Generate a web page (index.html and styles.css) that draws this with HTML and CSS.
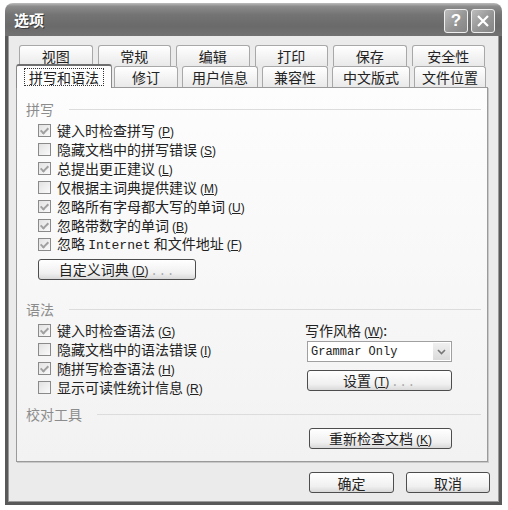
FILE: index.html
```html
<!DOCTYPE html>
<html lang="zh-CN">
<head>
    <meta charset="UTF-8">
    <title>选项</title>
    <link rel="stylesheet" href="styles.css">
</head>
<body>
    <div class="window">
        <div class="titlebar">
            <div class="title">选项</div>
            <div class="title-buttons">
                <div class="tbtn">?</div>
                <div class="tbtn">
                    <svg width="14" height="14" viewBox="0 0 14 14"><path d="M2 2 L12 12 M12 2 L2 12" stroke="#fff" stroke-width="2.2" fill="none"/></svg>
                </div>
            </div>
        </div>

        <div class="frame">
            <div class="tab-row back">
                <div class="tab">视图</div>
                <div class="tab">常规</div>
                <div class="tab">编辑</div>
                <div class="tab">打印</div>
                <div class="tab">保存</div>
                <div class="tab">安全性</div>
            </div>
            <div class="tab-row front">
                <div class="tab selected"><span class="focus">拼写和语法</span></div>
                <div class="tab t-revise">修订</div>
                <div class="tab t-user">用户信息</div>
                <div class="tab t-compat">兼容性</div>
                <div class="tab t-asian">中文版式</div>
                <div class="tab t-files">文件位置</div>
            </div>

            <div class="panel">
                <div class="group-head"><span>拼写</span></div>
                <div class="checks">
                    <div class="check on"><span class="box"></span><span>键入时检查拼写<span class="key">(<u>P</u>)</span></span></div>
                    <div class="check"><span class="box"></span><span>隐藏文档中的拼写错误<span class="key">(<u>S</u>)</span></span></div>
                    <div class="check on"><span class="box"></span><span>总提出更正建议<span class="key">(<u>L</u>)</span></span></div>
                    <div class="check"><span class="box"></span><span>仅根据主词典提供建议<span class="key">(<u>M</u>)</span></span></div>
                    <div class="check on"><span class="box"></span><span>忽略所有字母都大写的单词<span class="key">(<u>U</u>)</span></span></div>
                    <div class="check on"><span class="box"></span><span>忽略带数字的单词<span class="key">(<u>B</u>)</span></span></div>
                    <div class="check on"><span class="box"></span><span>忽略 <span class="latin">Internet</span> 和文件地址<span class="key">(<u>F</u>)</span></span></div>
                </div>
                <div class="btn dict"><span>自定义词典<span class="key">(<u>D</u>)</span><span class="dots">...</span></span></div>

                <div class="group-head grammar-head"><span>语法</span></div>
                <div class="grammar">
                    <div class="checks">
                        <div class="check on"><span class="box"></span><span>键入时检查语法<span class="key">(<u>G</u>)</span></span></div>
                        <div class="check"><span class="box"></span><span>隐藏文档中的语法错误<span class="key">(<u>I</u>)</span></span></div>
                        <div class="check on"><span class="box"></span><span>随拼写检查语法<span class="key">(<u>H</u>)</span></span></div>
                        <div class="check"><span class="box"></span><span>显示可读性统计信息<span class="key">(<u>R</u>)</span></span></div>
                    </div>
                    <div class="style-col">
                        <div class="field-label"><span>写作风格<span class="key">(<u>W</u>)</span>:</span></div>
                        <div class="select">
                            <span class="latin small">Grammar Only</span>
                            <span class="arrow">
                                <svg width="9" height="6" viewBox="0 0 9 6"><path d="M1 1 L4.5 4.5 L8 1" stroke="#777" stroke-width="1.6" fill="none"/></svg>
                            </span>
                        </div>
                        <div class="btn settings"><span>设置<span class="key">(<u>T</u>)</span><span class="dots">...</span></span></div>
                    </div>
                </div>

                <div class="group-head tools-head"><span>校对工具</span></div>
                <div class="btn recheck"><span>重新检查文档<span class="key">(<u>K</u>)</span></span></div>
            </div>

            <div class="footer">
                <div class="btn ok">确定</div>
                <div class="btn cancel">取消</div>
            </div>
        </div>
    </div>
</body>
</html>
```

FILE: styles.css
```css
body {
    margin: 0;
    background: #fff;
    font-family: "Noto Sans CJK SC", sans-serif;
    font-size: 14px;
    line-height: 18px;
    color: #222;
}
.window {
    width: 497px;
    height: 502px;
    margin: 3px 0 0 5px;
    display: flex;
    flex-direction: column;
}
.titlebar {
    height: 33px;
    flex-shrink: 0;
    box-sizing: border-box;
    border-radius: 8px 8px 0 0;
    background: linear-gradient(#bdbdbd 0%, #8c8c8c 10%, #747474 35%, #6a6a6a 70%, #727272 100%);
    display: flex;
    align-items: center;
    justify-content: space-between;
    padding: 0 7px 0 9px;
}
.title {
    color: #fff;
    font-weight: bold;
    font-size: 15px;
    text-shadow: 1px 1px 0 #3a3a3a;
}
.title-buttons {
    display: flex;
    gap: 3px;
    margin-top: 2px;
}
.tbtn {
    width: 22px;
    height: 22px;
    border: 1px solid #eee;
    border-radius: 3px;
    background: linear-gradient(135deg, #bcbcbc 0%, #959595 55%, #858585 100%);
    color: #fff;
    display: flex;
    align-items: center;
    justify-content: center;
    font: bold 17px "Liberation Sans", sans-serif;
}

.frame {
    flex: 1;
    background: #ebebeb;
    border: 3px solid #595959;
    border-top: 0;
    box-shadow: inset 1px 0 0 #9a9a9a, inset -1px 0 0 #9a9a9a, inset 0 -1px 0 #9a9a9a;
    padding: 9px 11px 9px 8px;
    display: flex;
    flex-direction: column;
}

/* tabs */
.tab-row {
    display: flex;
    height: 21px;
    flex-shrink: 0;
}
.tab-row.back {
    padding: 0 3px;
    gap: 5px;
}
.tab-row.back .tab {
    flex: 1;
}
.tab-row.front {
    padding: 0 2px;
    gap: 4px;
}
.tab {
    box-sizing: border-box;
    border: 1px solid #a8a8a8;
    border-bottom: 0;
    border-radius: 3px 3px 0 0;
    background: linear-gradient(#ffffff, #e9e9e9);
    display: flex;
    align-items: center;
    justify-content: center;
    line-height: 1;
}
.tab.selected {
    width: 96px;
    height: 24px;
    margin: -2px -2px -1px;
    position: relative;
    z-index: 1;
    background: #fdfdfd;
    border-color: #8a8a8a;
    border-top: 2px solid #6e6e6e;
}
.focus {
    border: 1px dotted #333;
    padding: 1px 4px;
}
.t-revise { width: 64px; }
.t-user { width: 76px; }
.t-compat { width: 66px; }
.t-asian { width: 78px; }
.t-files { flex: 1; }

/* panel */
.panel {
    height: 375px;
    flex-shrink: 0;
    box-sizing: border-box;
    border: 1px solid #9a9a9a;
    box-shadow: 1px 1px 0 #c9c9c9;
    background: linear-gradient(#fdfdfd, #f2f2f2);
    padding: 12px 6px 0 9px;
    display: flex;
    flex-direction: column;
}
.group-head {
    display: flex;
    align-items: center;
    height: 18px;
    color: #8c8c8c;
}
.group-head::after {
    content: "";
    flex: 1;
    border-top: 1px solid #dcdcdc;
    margin-left: 15px;
}
.grammar-head {
    margin-top: 20px;
}
.tools-head {
    margin-top: 8px;
}
.checks {
    margin-top: 3px;
    padding-left: 12px;
}
.check {
    display: flex;
    align-items: center;
    height: 19px;
    white-space: nowrap;
}
.box {
    width: 13px;
    height: 13px;
    box-sizing: border-box;
    border: 1px solid #8a8a8a;
    background: linear-gradient(135deg, #e2e2e2, #fafafa);
    margin-right: 6px;
    flex-shrink: 0;
    display: flex;
    align-items: center;
    justify-content: center;
}
.check.on .box::after {
    content: "";
    width: 3px;
    height: 6px;
    border: solid #a0a0a0;
    border-width: 0 2px 2px 0;
    transform: rotate(45deg);
    margin-top: -2px;
}
.key {
    font-family: "Liberation Sans", sans-serif;
    font-size: 12px;
    margin-left: 3px;
}
.latin {
    font-family: "Liberation Mono", monospace;
    font-size: 13px;
}
.latin.small {
    font-size: 12px;
}
.dots {
    color: #a8a8a8;
    font-family: "Liberation Mono", monospace;
    font-size: 12px;
    letter-spacing: 1px;
    margin-left: 2px;
}

/* buttons */
.btn {
    box-sizing: border-box;
    height: 21px;
    border: 1px solid #4d4d4d;
    border-radius: 3px;
    background: linear-gradient(#ffffff 0%, #f0f0f0 70%, #d9d9d9 100%);
    display: flex;
    align-items: center;
    justify-content: center;
    line-height: 1;
    white-space: nowrap;
}
.dict {
    width: 158px;
    margin: 5px 0 0 12px;
}
.grammar {
    display: flex;
}
.style-col {
    margin-left: auto;
    margin-right: 29px;
    width: 147px;
    margin-top: 4px;
}
.field-label {
    height: 18px;
    display: flex;
    align-items: center;
}
.select {
    height: 21px;
    box-sizing: border-box;
    margin: 1px 0 0 2px;
    border: 1px solid #a0a0a0;
    background: #fff;
    display: flex;
    align-items: center;
    justify-content: space-between;
    padding-left: 3px;
}
.arrow {
    width: 17px;
    height: 17px;
    margin-right: 1px;
    background: linear-gradient(#f0f0f0, #dadada);
    display: flex;
    align-items: center;
    justify-content: center;
}
.settings {
    margin: 8px 0 0 2px;
}
.recheck {
    width: 143px;
    align-self: flex-end;
    margin: 5px 29px 0 0;
}
.footer {
    margin-top: auto;
    margin-right: -2px;
    display: flex;
    justify-content: flex-end;
    gap: 12px;
}
.ok {
    width: 85px;
}
.cancel {
    width: 84px;
}
```
